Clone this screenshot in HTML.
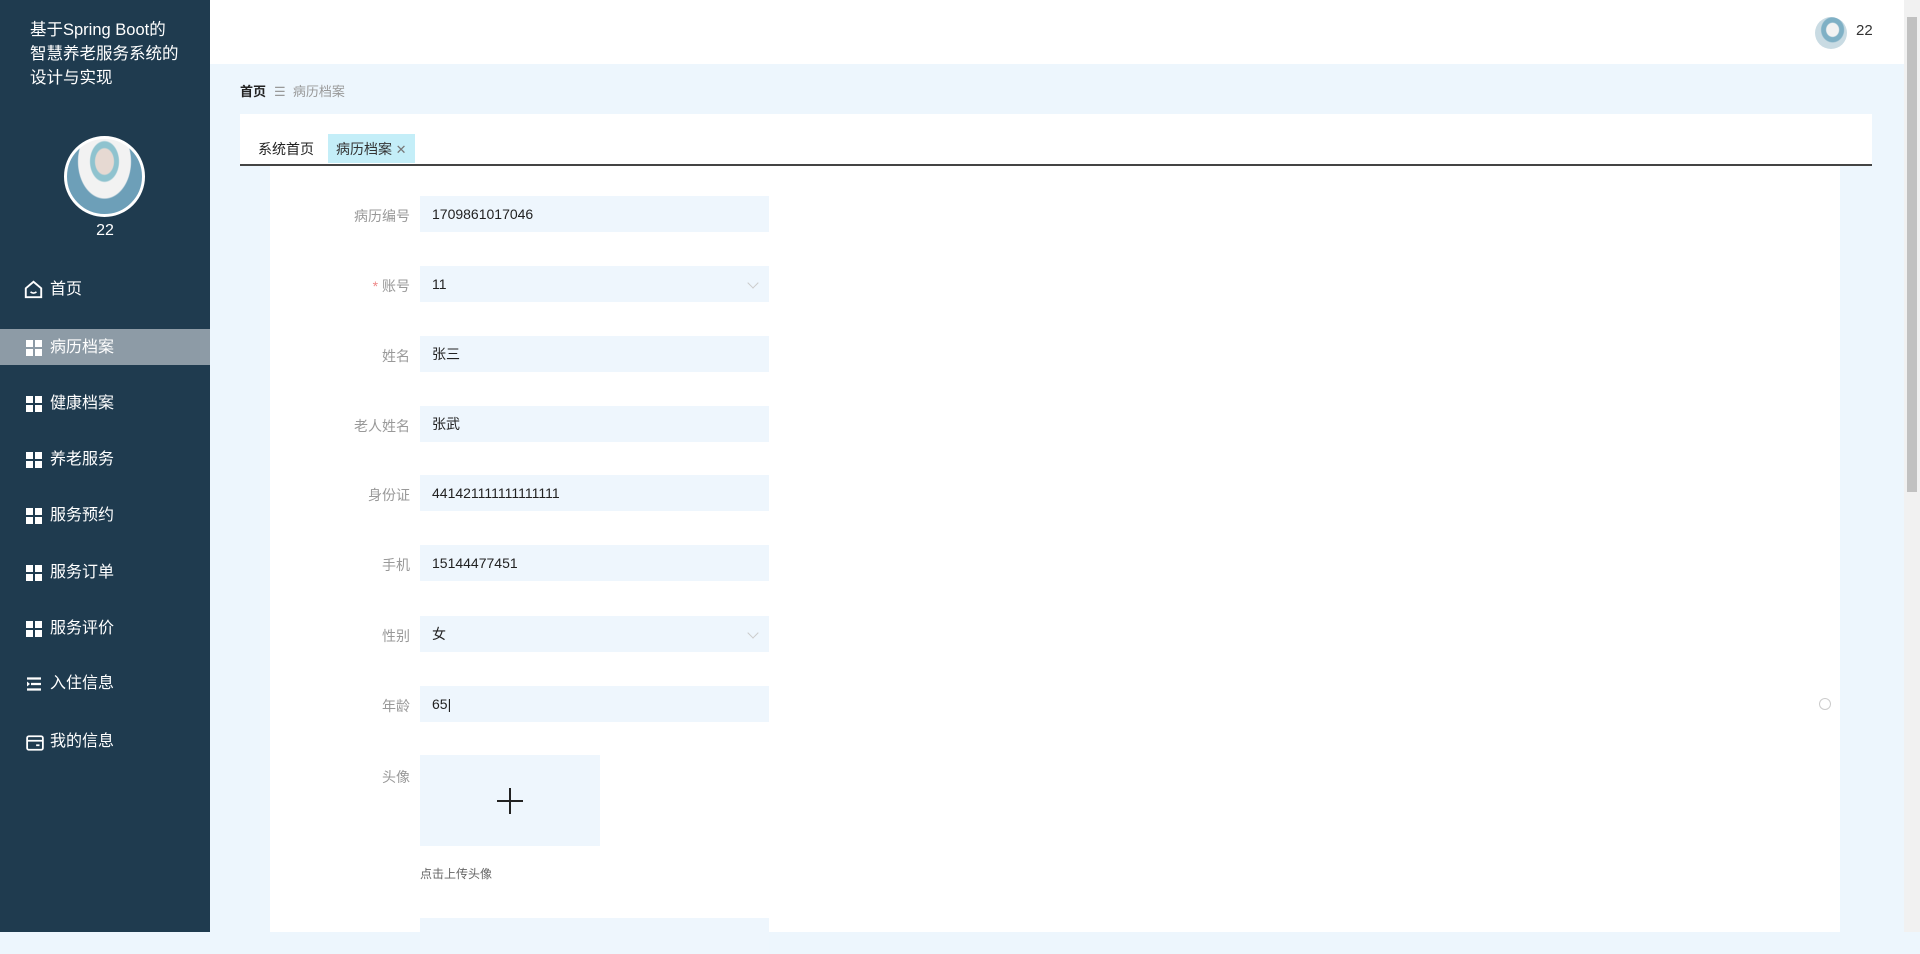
<!DOCTYPE html>
<html style="background:#edf6fd"><head><meta charset="utf-8"><style>
*{margin:0;padding:0;box-sizing:border-box}
body{width:1920px;height:932px;overflow:hidden;background:#edf6fd;font-family:"Liberation Sans","Noto Sans CJK SC",sans-serif;position:relative}
.side{position:absolute;left:0;top:0;width:210px;height:932px;background:#1f3b4f;color:#fff}
.title{position:absolute;left:30px;top:18px;font-size:16.5px;line-height:24px;width:150px}
.av{position:absolute;left:64px;top:136px;width:81px;height:81px;border-radius:50%;border:3px solid #fff;background:radial-gradient(ellipse at 50% 30%,#e6d9d2 0 9px,#8fc3cf 10px 14px,#f2f2f2 15px 26px,#6d9fb8 27px)}
.uname{position:absolute;left:0;width:210px;text-align:center;top:222px;font-size:16px}
.mi{position:absolute;left:0;width:210px;height:36px;line-height:38px;font-size:16px;padding-left:50px}
.mi.act{background:#8d9ba6}
.ic{position:absolute;left:26px;top:11px;width:16px;height:16px}
.ic.g{background:linear-gradient(#fff,#fff) 0 0/7px 7px no-repeat,linear-gradient(#fff,#fff) 9px 0/7px 7px no-repeat,linear-gradient(#fff,#fff) 0 9px/7px 7px no-repeat,linear-gradient(#fff,#fff) 9px 9px/7px 7px no-repeat}
.hdr{position:absolute;left:210px;top:0;width:1694px;height:64px;background:#fff}
.scroll{position:absolute;right:0;top:0;width:16px;height:932px;background:#f1f1f1}
.thumb{position:absolute;left:3px;top:17px;width:10px;height:475px;background:#c1c1c1}
.bc{position:absolute;left:240px;top:81px;font-size:13px;color:#999}
.bc b{color:#222;margin-right:8px}
.tabs{position:absolute;left:240px;top:114px;width:1632px;height:52px;background:#fff;border-bottom:2px solid #444}
.tab{position:absolute;top:20px;height:29px;line-height:31px;font-size:14px;color:#222;padding:0 8px}
.form{position:absolute;left:270px;top:166px;width:1570px;height:766px;background:#fff}
.lbl{position:absolute;width:140px;left:270px;text-align:right;font-size:14px;color:#999}
.inp{position:absolute;left:420px;width:349px;height:36px;background:#eef6fd;font-size:14px;color:#222;line-height:36px;padding-left:12px}
.arr{position:absolute;right:12px;top:13px;width:8px;height:8px;border-right:1px solid #ccc;border-bottom:1px solid #ccc;transform:rotate(45deg)}
</style></head><body>
<div class="side">
 <div class="title">基于Spring Boot的智慧养老服务系统的设计与实现</div>
 <div class="av"></div>
 <div class="uname">22</div>
 <div class="mi" style="top:271px"><svg class="ic" viewBox="0 0 16 16" style="left:24px;top:9px;width:19px;height:19px"><path d="M1.5 7 L8 1.5 L14.5 7 V14.5 H1.5 Z" fill="none" stroke="#fff" stroke-width="1.6"/><path d="M5.5 10 Q8 12 10.5 10" fill="none" stroke="#fff" stroke-width="1.4"/></svg>首页</div>
 <div class="mi act" style="top:329px"><span class="ic g"></span>病历档案</div>
 <div class="mi" style="top:385px"><span class="ic g"></span>健康档案</div>
 <div class="mi" style="top:441px"><span class="ic g"></span>养老服务</div>
 <div class="mi" style="top:497px"><span class="ic g"></span>服务预约</div>
 <div class="mi" style="top:554px"><span class="ic g"></span>服务订单</div>
 <div class="mi" style="top:610px"><span class="ic g"></span>服务评价</div>
 <div class="mi" style="top:665px"><svg class="ic" viewBox="0 0 16 16"><path d="M1 2.5H15M5 8H15M1 13.5H15" stroke="#fff" stroke-width="2.2"/><path d="M1 5.5 L4 8 L1 10.5Z" fill="#fff"/></svg>入住信息</div>
 <div class="mi" style="top:723px"><svg class="ic" viewBox="0 0 16 16" style="width:18px;height:18px"><rect x="1" y="2" width="14" height="12" rx="1.5" fill="none" stroke="#fff" stroke-width="1.6"/><path d="M1 6H15M9 10H12" stroke="#fff" stroke-width="1.6"/></svg>我的信息</div>
</div>
<div class="hdr">
 <div style="position:absolute;left:1605px;top:17px;width:32px;height:32px;border-radius:50%;background:radial-gradient(ellipse at 55% 40%,#f2f2f2 0 6px,#7fb0c5 7px 11px,#c9dbe3 12px)"></div>
 <div style="position:absolute;left:1646px;top:22px;font-size:15px;color:#333">22</div>
</div>
<div class="bc"><b>首页</b>☰&nbsp;&nbsp;病历档案</div>
<div class="tabs">
 <div class="tab" style="left:10px">系统首页</div>
 <div class="tab" style="left:88px;background:#c4eef8;color:#333">病历档案<span style="color:#777;font-size:13px"> ✕</span></div>
</div>
<div class="form"></div>
<div class="lbl" style="top:206px">病历编号</div><div class="inp" style="top:196px">1709861017046</div>
<div class="lbl" style="top:276px"><span style="color:#e88">* </span>账号</div><div class="inp" style="top:266px">11<span class="arr"></span></div>
<div class="lbl" style="top:346px">姓名</div><div class="inp" style="top:336px">张三</div>
<div class="lbl" style="top:416px">老人姓名</div><div class="inp" style="top:406px">张武</div>
<div class="lbl" style="top:485px">身份证</div><div class="inp" style="top:475px">441421111111111111</div>
<div class="lbl" style="top:555px">手机</div><div class="inp" style="top:545px">15144477451</div>
<div class="lbl" style="top:626px">性别</div><div class="inp" style="top:616px">女<span class="arr"></span></div>
<div class="lbl" style="top:696px">年龄</div><div class="inp" style="top:686px">65|</div>
<div style="position:absolute;left:1819px;top:698px;width:12px;height:12px;border:1px solid #ccc;border-radius:50%"></div>
<div class="lbl" style="top:767px">头像</div>
<div style="position:absolute;left:420px;top:755px;width:180px;height:91px;background:#eef6fd"></div>
<div style="position:absolute;left:497px;top:800px;width:26px;height:2px;background:#222"></div>
<div style="position:absolute;left:509px;top:788px;width:2px;height:26px;background:#222"></div>
<div style="position:absolute;left:420px;top:865px;font-size:12px;color:#666">点击上传头像</div>
<div class="inp" style="top:918px"></div>
<div class="scroll"><div class="thumb"></div></div>
</body></html>
